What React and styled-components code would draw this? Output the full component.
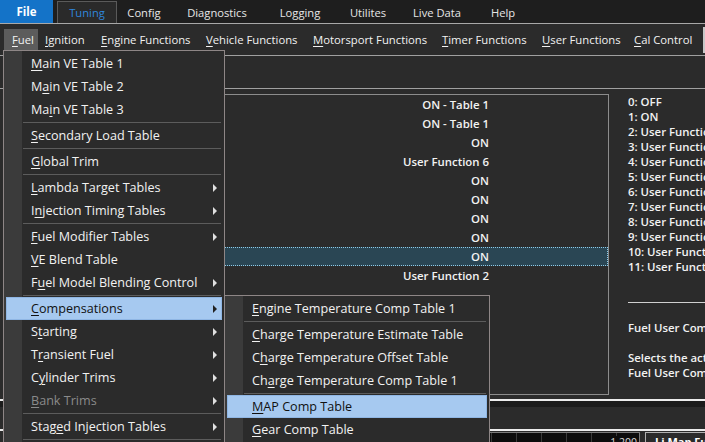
import React from "react";
import styled, { createGlobalStyle } from "styled-components";

const GlobalStyle = createGlobalStyle`
  html, body { margin: 0; padding: 0; background: #2b2b2b; }
  body {
    font-family: "Open Sans", "Noto Sans", sans-serif;
    color: #f0f0f0;
    overflow: hidden;
  }
  * { box-sizing: border-box; }
  u { text-decoration: underline; text-decoration-thickness: 1px; text-underline-offset: 2px; }
`;

const tabs = [
  { name: "Tuning", w: 60, active: true },
  { name: "Config", w: 54 },
  { name: "Diagnostics", w: 92 },
  { name: "Logging", w: 74 },
  { name: "Utilites", w: 62 },
  { name: "Live Data", w: 76 },
  { name: "Help", w: 56 },
];

const menus = [
  { t: "Fuel", u: 0, w: 34, open: true },
  { t: "Ignition", u: 0, w: 56 },
  { t: "Engine Functions", u: 0, w: 105 },
  { t: "Vehicle Functions", u: 0, w: 107 },
  { t: "Motorsport Functions", u: 0, w: 129 },
  { t: "Timer Functions", u: 0, w: 100 },
  { t: "User Functions", u: 0, w: 92 },
  { t: "Cal Control", u: 0, w: 73 },
];

const rows = [
  "ON - Table 1",
  "ON - Table 1",
  "ON",
  "User Function 6",
  "ON",
  "ON",
  "ON",
  "ON",
  "ON",
  "User Function 2",
];
const selectedRow = 8;

const options = ["0: OFF", "1: ON"];
for (let i = 1; i <= 10; i++) options.push(`${i + 1}: User Function ${i}`);

const fuelMenu = [
  { t: "Main VE Table 1", u: 0 },
  { t: "Main VE Table 2", u: 1 },
  { t: "Main VE Table 3", u: 2 },
  "sep",
  { t: "Secondary Load Table", u: 0 },
  "sep",
  { t: "Global Trim", u: 0 },
  "sep",
  { t: "Lambda Target Tables", u: 0, sub: true },
  { t: "Injection Timing Tables", u: 1, sub: true },
  "sep",
  { t: "Fuel Modifier Tables", u: 0, sub: true },
  { t: "VE Blend Table", u: 0 },
  { t: "Fuel Model Blending Control", u: 1, sub: true },
  "sep",
  { t: "Compensations", u: 0, sub: true, active: true },
  { t: "Starting", u: 1, sub: true },
  { t: "Transient Fuel", u: 1, sub: true },
  { t: "Cylinder Trims", u: 1, sub: true },
  { t: "Bank Trims", u: 0, sub: true, disabled: true },
  "sep",
  { t: "Staged Injection Tables", u: 4, sub: true },
  "sep",
  { t: "Fuel Pump Control", u: 5, sub: true },
];

const compMenu = [
  { t: "Engine Temperature Comp Table 1", u: 0 },
  "sep",
  { t: "Charge Temperature Estimate Table", u: 0 },
  { t: "Charge Temperature Offset Table", u: 1 },
  { t: "Charge Temperature Comp Table 1", u: 2 },
  "sep",
  { t: "MAP Comp Table", u: 0, active: true },
  { t: "Gear Comp Table", u: 0 },
  { t: "Baro Comp Table", u: 0 },
];

const Mn = ({ text, at }) => (
  <>
    {text.slice(0, at)}
    <u>{text[at]}</u>
    {text.slice(at + 1)}
  </>
);

const MenuList = ({ items }) =>
  items.map((it, i) =>
    it === "sep" ? (
      <Separator key={i} />
    ) : (
      <MenuItem key={i} $active={it.active} $disabled={it.disabled}>
        <Mn text={it.t} at={it.u} />
        {it.sub && <Arrow $active={it.active} />}
      </MenuItem>
    )
  );

export default function App() {
  return (
    <Window>
      <GlobalStyle />
      <Ribbon>
        <FileButton>File</FileButton>
        {tabs.map((t) => (
          <Tab key={t.name} $w={t.w} $active={t.active}>
            {t.name}
          </Tab>
        ))}
      </Ribbon>

      <MenuBar>
        {menus.map((m) => (
          <BarItem key={m.t} $w={m.w} $open={m.open}>
            <Mn text={m.t} at={m.u} />
          </BarItem>
        ))}
        <BarEdge />
      </MenuBar>

      <ToolStrip />

      <Content>
        <TablePanel>
          {rows.map((v, i) => (
            <Row key={i} $selected={i === selectedRow}>
              <RowLabel />
              <RowValue>{v}</RowValue>
            </Row>
          ))}
        </TablePanel>
        <InfoPanel>
          <OptionList>
            {options.map((o) => (
              <div key={o}>{o}</div>
            ))}
          </OptionList>
          <InfoRule />
          <InfoText $top={17}>Fuel User Compensation 1 Mode</InfoText>
          <InfoText $top={15}>Selects the active control function for</InfoText>
          <InfoText>Fuel User Compensation 1.</InfoText>
        </InfoPanel>
      </Content>

      <Bottom>
        <WhiteRule />
        <DarkBand />
        <BottomGap />
        <WhiteRule />
        <ChartRow>
          <Chart>
            <ChartValue>1.200</ChartValue>
          </Chart>
          <ChartLabel>Li Map Fuel</ChartLabel>
        </ChartRow>
      </Bottom>

      <FuelMenu>
        <MenuList items={fuelMenu} />
      </FuelMenu>
      <CompMenu>
        <MenuList items={compMenu} />
      </CompMenu>
    </Window>
  );
}

const Window = styled.div`
  position: relative;
  width: 705px;
  height: 442px;
  overflow: hidden;
  background: #2b2b2b;
  display: flex;
  flex-direction: column;
`;

const Ribbon = styled.div`
  display: flex;
  height: 24px;
  flex-shrink: 0;
  background: #1e1e1e;
  border-bottom: 1px solid #a8a8a8;
`;

const FileButton = styled.div`
  width: 53px;
  margin-right: 4px;
  background: #1473c8;
  color: #fff;
  font-weight: 700;
  font-size: 11.5px;
  display: flex;
  align-items: center;
  justify-content: center;
`;

const Tab = styled.div`
  width: ${(p) => p.$w}px;
  margin-top: 1px;
  display: flex;
  align-items: center;
  justify-content: center;
  font-size: 11.2px;
  color: ${(p) => (p.$active ? "#2f86dc" : "#e6e6e6")};
  background: ${(p) => (p.$active ? "#2a2a2a" : "transparent")};
  border: 1px solid ${(p) => (p.$active ? "#5a5a5a" : "transparent")};
  border-bottom: none;
`;

const MenuBar = styled.div`
  display: flex;
  align-items: center;
  height: 32px;
  flex-shrink: 0;
  padding-left: 4px;
  background: #2b2b2b;
  border-bottom: 1px solid #a0a0a0;
`;

const BarItem = styled.div`
  width: ${(p) => p.$w}px;
  height: 22px;
  padding-left: ${(p) => (p.$open ? 8 : 7)}px;
  display: flex;
  align-items: center;
  white-space: nowrap;
  font-size: 11.3px;
  color: #f2f2f2;
  background: ${(p) => (p.$open ? "#5c5c5c" : "transparent")};
`;

const BarEdge = styled.div`
  margin-left: auto;
  width: 2px;
  height: 26px;
  background: #c8c8c8;
`;

const ToolStrip = styled.div`
  height: 33px;
  flex-shrink: 0;
  border-bottom: 1px solid #a0a0a0;
`;

const Content = styled.div`
  display: flex;
  margin-top: 5px;
  padding-left: 8px;
  height: 301px;
  flex-shrink: 0;
`;

const TablePanel = styled.div`
  width: 601px;
  flex-shrink: 0;
  border: 1px solid #8c8c8c;
`;

const Row = styled.div`
  display: flex;
  align-items: center;
  height: 19px;
  font-size: 11.4px;
  font-weight: 600;
  color: #f2f2f2;
  background: ${(p) => (p.$selected ? "#2a4654" : "transparent")};
  outline: ${(p) => (p.$selected ? "1px dotted #8fcbe8" : "none")};
  outline-offset: -1px;
`;

const RowLabel = styled.div`
  flex: 1;
`;

const RowValue = styled.div`
  width: 140px;
  margin-right: 119px;
  text-align: right;
  white-space: nowrap;
`;

const InfoPanel = styled.div`
  flex: 1;
  min-width: 0;
  padding-left: 19px;
  overflow: hidden;
  font-size: 11.4px;
  font-weight: 600;
  color: #f2f2f2;
  white-space: nowrap;
`;

const OptionList = styled.div`
  line-height: 15px;
`;

const InfoRule = styled.div`
  margin-top: 28px;
  height: 1px;
  width: 200px;
  background: #d0d0d0;
`;

const InfoText = styled.div`
  line-height: 15px;
  margin-top: ${(p) => p.$top || 0}px;
`;

const Bottom = styled.div`
  display: flex;
  flex-direction: column;
  margin-top: 4px;
`;

const WhiteRule = styled.div`
  height: 2px;
  background: #ececec;
`;

const DarkBand = styled.div`
  height: 6px;
  background: #1b1b1b;
`;

const BottomGap = styled.div`
  height: 22px;
`;

const ChartRow = styled.div`
  display: flex;
  gap: 5px;
  margin-top: 1px;
  height: 12px;
  padding-left: 8px;
`;

const Chart = styled.div`
  flex: 1;
  position: relative;
  border: 1px solid #7a7a7a;
  border-bottom: none;
  background: #0c0c0c
    repeating-linear-gradient(
      to right,
      transparent 0 24px,
      #3a3a3a 24px 25px
    );
  background-position: 8px 0;
`;

const ChartValue = styled.span`
  position: absolute;
  right: 2px;
  top: 3px;
  font-size: 10.5px;
  line-height: 12px;
  color: #d8d8d8;
  background: #0c0c0c;
  padding-left: 2px;
`;

const ChartLabel = styled.div`
  width: 60px;
  border: 1px solid #b0b0b0;
  border-right: none;
  border-bottom: none;
  padding: 3px 0 0 9px;
  font-size: 11px;
  line-height: 12px;
  font-weight: 700;
  color: #fff;
  white-space: nowrap;
  overflow: hidden;
`;

const MenuBase = styled.div`
  position: absolute;
  padding-top: 1px;
  border: 1px solid #8e8686;
  background: linear-gradient(to right, #3b3b3b 0 18px, #2b2b2b 18px);
  font-size: 12.6px;
  color: #f2f2f2;
`;

const FuelMenu = styled(MenuBase)`
  left: 3px;
  top: 50px;
  width: 222px;
  z-index: 2;
`;

const CompMenu = styled(MenuBase)`
  left: 224px;
  top: 295px;
  width: 266px;
  z-index: 3;
`;

const MenuItem = styled.div`
  position: relative;
  height: 23px;
  display: flex;
  align-items: center;
  padding-left: 24px;
  margin: 0 2px;
  white-space: nowrap;
  color: ${(p) => (p.$active ? "#111" : p.$disabled ? "#8a8a8a" : "#f2f2f2")};
  background: ${(p) => (p.$active ? "#a6c9f0" : "transparent")};
  border: 1px solid ${(p) => (p.$active ? "#8fb6e4" : "transparent")};
`;

const Arrow = styled.span`
  position: absolute;
  right: 4px;
  top: 50%;
  margin-top: -4px;
  border-left: 4px solid ${(p) => (p.$active ? "#222" : "#e0e0e0")};
  border-top: 4px solid transparent;
  border-bottom: 4px solid transparent;
`;

const Separator = styled.div`
  height: 3px;
  margin-left: 19px;
  margin-right: 3px;
  display: flex;
  align-items: center;
  &::after {
    content: "";
    flex: 1;
    height: 1px;
    background: #5c5c5c;
  }
`;
